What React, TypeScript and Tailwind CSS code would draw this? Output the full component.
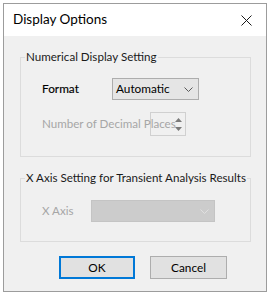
import React from "react";

const font = { fontFamily: 'Lato, "Noto Sans", sans-serif' };

function Chevron({ color }: { color: string }) {
  return (
    <svg width="9" height="5" viewBox="0 0 9 5" className="block">
      <path d="M0.5 0.5 L4.5 4.5 L8.5 0.5" fill="none" stroke={color} strokeWidth="1" />
    </svg>
  );
}

export default function App() {
  return (
    <div className="w-[271px] h-[295px] bg-white pt-[3px] pl-[3px]" style={font}>
      <div className="w-[264px] h-[289px] border border-[#9c9c9c] bg-[#f0f0f0] flex flex-col">
        <div className="h-[32px] bg-white flex items-center justify-between pl-[9px] pr-[14px]">
          <span className="text-[13.5px] text-black leading-none">Display Options</span>
          <svg width="11" height="11" viewBox="0 0 11 11">
            <path d="M0.5 0.5 L10.5 10.5 M10.5 0.5 L0.5 10.5" stroke="#1a1a1a" strokeWidth="1" />
          </svg>
        </div>
        <div className="flex flex-col pl-[16px]">
          <fieldset className="mt-[13px] w-[231px] h-[108px] border border-[#dcdcdc] pl-[21px]">
            <legend className="ml-[-17px] px-[1px] whitespace-nowrap text-[11.6px] leading-[16px] text-[#1a1a1a]">
              Numerical Display Setting
            </legend>
            <div className="mt-[13px] flex items-center">
              <span className="w-[70px] text-[11.8px] text-black [-webkit-text-stroke:0.15px_black]">Format</span>
              <div className="w-[87px] h-[22px] border border-[#adadad] bg-[#e5e5e5] flex items-center justify-between pl-[3px] pr-[5px]">
                <span className="text-[11.8px] text-black">Automatic</span>
                <Chevron color="#5a5a5a" />
              </div>
            </div>
            <div className="mt-[12px] flex items-center">
              <span className="w-[108px] relative z-10 whitespace-nowrap text-[11.6px] text-[#a6a6a6]">
                Number of Decimal Places
              </span>
              <div className="w-[36px] h-[24px] border border-[#d0d0d0] flex justify-end">
                <div className="w-[14px] flex flex-col items-center justify-center gap-[5px]">
                  <svg width="7" height="4" viewBox="0 0 7 4"><path d="M0 4 L3.5 0 L7 4 Z" fill="#7a7a7a" /></svg>
                  <svg width="7" height="4" viewBox="0 0 7 4"><path d="M0 0 L3.5 4 L7 0 Z" fill="#7a7a7a" /></svg>
                </div>
              </div>
            </div>
          </fieldset>
          <fieldset className="mt-[13px] w-[231px] h-[72px] border border-[#dcdcdc] pl-[21px]">
            <legend className="ml-[-17px] px-[1px] whitespace-nowrap text-[11.6px] leading-[16px] text-[#1a1a1a]">
              X Axis Setting for Transient Analysis Results
            </legend>
            <div className="mt-[14px] flex items-center">
              <span className="w-[49px] text-[11.6px] text-[#a6a6a6]">X Axis</span>
              <div className="w-[124px] h-[22px] border border-[#c4c4c4] bg-[#cccccc] flex items-center justify-end pr-[5px]">
                <Chevron color="#e0e0e0" />
              </div>
            </div>
          </fieldset>
        </div>
        <div className="mt-[14px] ml-[55px] flex gap-[15px]">
          <button className="w-[76px] h-[23px] border-2 border-[#0078d7] bg-[#e1e1e1] text-[11.8px] text-black">
            OK
          </button>
          <button className="w-[77px] h-[23px] border border-[#adadad] bg-[#e1e1e1] text-[11.8px] text-black">
            Cancel
          </button>
        </div>
      </div>
    </div>
  );
}
